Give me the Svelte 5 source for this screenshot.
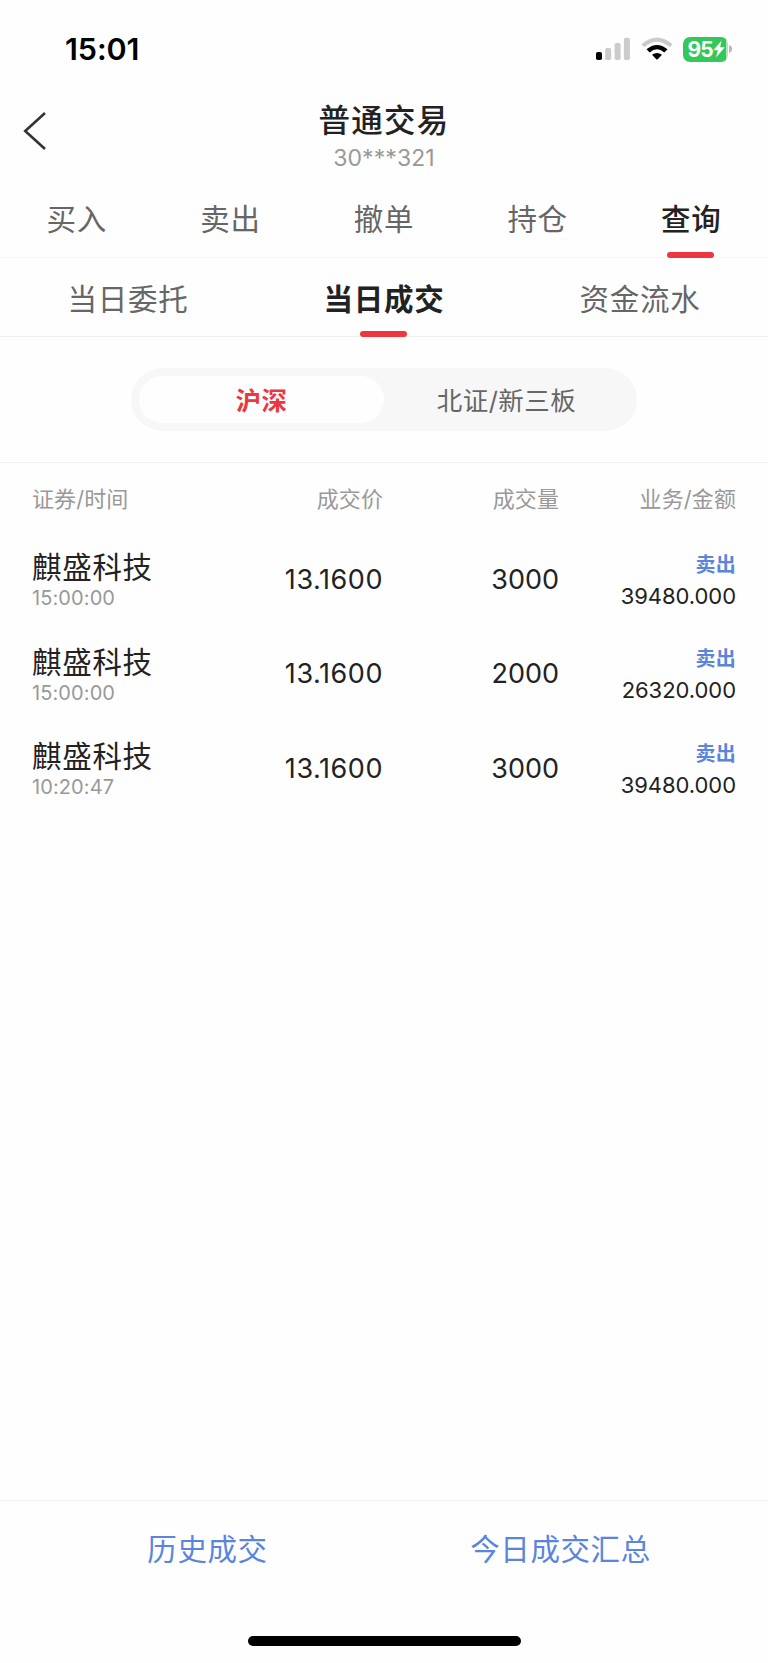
<script>
  const tabs = ['买入', '卖出', '撤单', '持仓', '查询'];
  const subTabs = ['当日委托', '当日成交', '资金流水'];
  const markets = ['沪深', '北证/新三板'];
  const columns = ['证券/时间', '成交价', '成交量', '业务/金额'];

  const deals = [
    { name: '麒盛科技', time: '15:00:00', price: '13.1600', volume: '3000', side: '卖出', amount: '39480.000' },
    { name: '麒盛科技', time: '15:00:00', price: '13.1600', volume: '2000', side: '卖出', amount: '26320.000' },
    { name: '麒盛科技', time: '10:20:47', price: '13.1600', volume: '3000', side: '卖出', amount: '39480.000' },
  ];

  let tab = $state('查询');
  let subTab = $state('当日成交');
  let market = $state('沪深');
</script>

<div class="page">
  <div class="status">
    <span class="clock">15:01</span>
    <div class="status-icons">
      <svg class="signal" width="34" height="24" viewBox="0 0 34 24">
        <rect x="0" y="15" width="6" height="8" rx="1.8" fill="#000" />
        <rect x="9.2" y="11" width="6" height="12" rx="1.8" fill="#cbcbcb" />
        <rect x="18.6" y="6" width="6" height="17" rx="1.8" fill="#cbcbcb" />
        <rect x="27.9" y="0.7" width="6" height="22.3" rx="1.8" fill="#cbcbcb" />
      </svg>
      <svg class="wifi" width="32" height="24" viewBox="0 0 32 24">
        <path d="M0.4 7.2 Q16 -6.4 31.6 7.2 L28.6 10.2 Q16 -0.8 3.4 10.2 Z" fill="#cbcbcb" />
        <path d="M5.5 12.3 Q16 3.5 26.5 12.3 L23.3 15.5 Q16 9.2 8.7 15.5 Z" fill="#000" />
        <path d="M11 17.7 Q16 14.2 21 17.7 L16.7 22.3 Q16 22.9 15.3 22.3 Z" fill="#000" />
      </svg>
      <div class="battery">
        <div class="battery-body">
          <span>95</span>
          <svg width="12" height="18" viewBox="0 0 12 18">
            <path d="M8.6 0.5 L0.3 10.2 H4.8 L3 17.5 L11.8 7.2 H7.1 Z" fill="#fff" />
          </svg>
        </div>
        <svg width="4" height="8" viewBox="0 0 4 8">
          <path d="M0 0 Q3.2 1.2 3.2 4 Q3.2 6.8 0 8 Z" fill="#b9b9b9" />
        </svg>
      </div>
    </div>
  </div>

  <header>
    <button class="back" aria-label="返回">
      <svg width="24" height="40" viewBox="0 0 24 40">
        <path d="M22 2 L2.2 20 L22 38" fill="none" stroke="#333" stroke-width="2.6" />
      </svg>
    </button>
    <div class="heading">
      <h1>普通交易</h1>
      <p>30***321</p>
    </div>
  </header>

  <nav class="tabs">
    {#each tabs as t}
      <button class:active={t === tab} onclick={() => (tab = t)}>{t}</button>
    {/each}
  </nav>

  <nav class="tabs sub">
    {#each subTabs as t}
      <button class:active={t === subTab} onclick={() => (subTab = t)}>{t}</button>
    {/each}
  </nav>

  <div class="market">
    <div class="switch">
      {#each markets as m}
        <button class:on={m === market} onclick={() => (market = m)}>{m}</button>
      {/each}
    </div>
  </div>

  <main>
    <div class="grid head">
      {#each columns as c}
        <span>{c}</span>
      {/each}
    </div>
    {#each deals as d}
      <div class="grid deal">
        <div>
          <div class="name">{d.name}</div>
          <div class="time">{d.time}</div>
        </div>
        <div class="num price">{d.price}</div>
        <div class="num">{d.volume}</div>
        <div>
          <div class="side">{d.side}</div>
          <div class="amount">{d.amount}</div>
        </div>
      </div>
    {/each}
  </main>

  <footer>
    <button>历史成交</button>
    <button>今日成交汇总</button>
  </footer>
  <div class="home"></div>
</div>

<style>
  :global(body) { background: #fefefe; }
  .page {
    box-sizing: border-box;
    width: 768px;
    height: 1663px;
    display: flex;
    flex-direction: column;
    overflow: hidden;
    background: #fefefe;
    color: #222;
    font-family: Inter, "Noto Sans CJK SC", sans-serif;
  }
  button {
    border: 0;
    padding: 0;
    background: none;
    color: inherit;
    font: inherit;
    letter-spacing: inherit;
  }

  .status {
    height: 98px;
    flex-shrink: 0;
    display: flex;
    align-items: center;
    justify-content: space-between;
    padding: 0 35px 0 65px;
    color: #000;
  }
  .clock { font-size: 30.5px; font-weight: 600; line-height: 36px; letter-spacing: -0.1px; }
  .status-icons { display: flex; align-items: center; }
  .wifi { margin-left: 11px; }
  .battery { display: flex; align-items: center; gap: 1px; margin-left: 10px; }
  .battery-body {
    width: 45px;
    height: 25px;
    box-sizing: border-box;
    display: flex;
    align-items: center;
    padding-left: 4.5px;
    border-radius: 7px;
    background: linear-gradient(90deg, #34c759 43px, #b9dcc2 43px);
    color: #fff;
    font-size: 21px;
    font-weight: 700;
    line-height: 25px;
    letter-spacing: -0.8px;
  }
  .battery svg { flex-shrink: 0; }

  header {
    height: 92px;
    flex-shrink: 0;
    display: grid;
    grid-template-columns: 80px 1fr 80px;
  }
  .back { display: flex; padding: 13px 0 0 23px; }
  .heading { text-align: center; }
  h1 {
    margin: 3px 0 0;
    font-size: 31.5px;
    font-weight: 500;
    line-height: 40px;
    letter-spacing: 1.2px;
  }
  p {
    margin: 3px 0 0;
    color: #999;
    font-size: 23px;
    line-height: 28px;
    letter-spacing: 0.1px;
  }

  .tabs {
    height: 68px;
    flex-shrink: 0;
    box-sizing: border-box;
    display: flex;
    border-bottom: 1px solid #f6f6f6;
    color: #666;
    font-size: 29.5px;
    letter-spacing: 0.7px;
  }
  .tabs button {
    flex: 1;
    position: relative;
    height: 59px;
    line-height: 59px;
  }
  .tabs .active { color: #222; font-weight: 500; }
  .tabs .active::after {
    content: "";
    position: absolute;
    left: 50%;
    bottom: -9px;
    width: 47px;
    height: 6px;
    margin-left: -24px;
    border-radius: 3px;
    background: #eb373d;
  }
  .sub { height: 79px; border-color: #f0f0f0; }
  .sub button { height: 83px; line-height: 83px; }
  .sub .active { font-weight: 700; }
  .sub .active::after { bottom: 4px; }

  .market {
    height: 126px;
    flex-shrink: 0;
    box-sizing: border-box;
    display: flex;
    align-items: center;
    justify-content: center;
    border-bottom: 1px solid #f0f0f0;
  }
  .switch {
    width: 506px;
    height: 63px;
    box-sizing: border-box;
    display: flex;
    padding: 8px;
    border-radius: 32px;
    background: #f7f7f7;
    color: #666;
    font-size: 25.5px;
    letter-spacing: 0.5px;
  }
  .switch button { flex: 1; line-height: 50px; border-radius: 24px; }
  .switch .on { background: #fefefe; color: #eb373d; font-weight: 700; }

  main { flex: 1; padding: 0 32px; }
  .grid { display: grid; grid-template-columns: 1fr 175px 176px 177px; }
  .grid > :not(:first-child) { text-align: right; }
  .head {
    height: 69px;
    color: #999;
    font-size: 22px;
    line-height: 72px;
    letter-spacing: 0.1px;
  }
  .deal { height: 94.5px; align-items: center; }
  .name { font-size: 29.5px; line-height: 38px; letter-spacing: 0.7px; }
  .time { color: #999; font-size: 20px; line-height: 24px; letter-spacing: 0.1px; }
  .num { padding-top: 1px; font-size: 27px; line-height: 36px; }
  .price { letter-spacing: 0.55px; }
  .side {
    color: #5a85dc;
    font-size: 20px;
    font-weight: 700;
    line-height: 33px;
    padding-top: 1px;
    letter-spacing: 0.3px;
  }
  .amount { font-size: 22px; line-height: 29px; letter-spacing: -0.05px; }

  footer {
    height: 136px;
    flex-shrink: 0;
    box-sizing: border-box;
    display: flex;
    align-items: flex-start;
    padding: 0 31px;
    border-top: 1px solid #f0f0f0;
    color: #5a85dc;
    font-size: 29.5px;
    letter-spacing: 0.6px;
  }
  footer button { flex: 1; line-height: 97px; }
  .home {
    width: 273px;
    height: 10px;
    flex-shrink: 0;
    margin: 0 auto 17px;
    border-radius: 5px;
    background: #000;
  }
</style>
